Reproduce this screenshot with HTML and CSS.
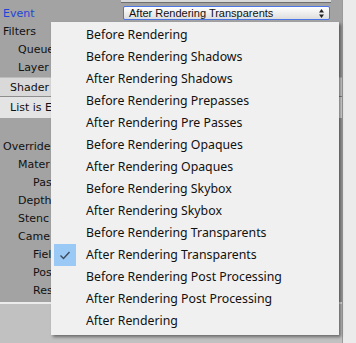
FILE: index.html
```html
<!DOCTYPE html>
<html>
<head>
<meta charset="utf-8">
<link rel="stylesheet" href="styles.css">
</head>
<body>
<div class="app">
  <div class="inspector">
    <div class="prev"><div class="prev-field"></div></div>
    <div class="row event-row">
      <span class="label event">Event</span>
      <div class="popup">
        <span>After Rendering Transparents</span>
        <svg class="arrows" width="5" height="9" viewBox="0 0 5 9"><path d="M2.5 0L5 3.5H0Z M2.5 9L5 5.5H0Z" fill="#222"/></svg>
      </div>
    </div>
    <div class="row"><span class="label">Filters</span></div>
    <div class="row i1"><span class="label">Queue</span></div>
    <div class="row i1 tall"><span class="label">Layer</span></div>
    <div class="list-head"><span class="label">Shader</span></div>
    <div class="list-body"><span class="label">List is E</span></div>
    <div class="row gap"></div>
    <div class="row"><span class="label">Override</span></div>
    <div class="row i1"><span class="label">Mater</span></div>
    <div class="row i2"><span class="label">Pas</span></div>
    <div class="row i1"><span class="label">Depth</span></div>
    <div class="row i1"><span class="label">Stenc</span></div>
    <div class="row i1"><span class="label">Came</span></div>
    <div class="row i2"><span class="label">Fiel</span></div>
    <div class="row i2"><span class="label">Pos</span></div>
    <div class="row i2"><span class="label">Res</span></div>
    <div class="foot"></div>
  </div>
  <div class="side"></div>

  <ul class="menu">
    <li>Before Rendering</li>
    <li>Before Rendering Shadows</li>
    <li>After Rendering Shadows</li>
    <li>Before Rendering Prepasses</li>
    <li>After Rendering Pre Passes</li>
    <li>Before Rendering Opaques</li>
    <li>After Rendering Opaques</li>
    <li>Before Rendering Skybox</li>
    <li>After Rendering Skybox</li>
    <li>Before Rendering Transparents</li>
    <li class="checked"><span class="check"><svg width="22" height="22" viewBox="0 0 22 22"><path d="M6.5 11.5L9.5 14.5L15.5 8" fill="none" stroke="#3d4b5c" stroke-width="1.4"/></svg></span>After Rendering Transparents</li>
    <li>Before Rendering Post Processing</li>
    <li>After Rendering Post Processing</li>
    <li>After Rendering</li>
  </ul>
</div>
</body>
</html>
```

FILE: styles.css
```css
* { box-sizing: border-box; }
html, body { margin: 0; padding: 0; }
body { width: 356px; height: 343px; overflow: hidden; background: #eaeaea; }
.app { position: relative; display: flex; width: 356px; height: 343px; }
.inspector {
  width: 343px;
  height: 343px;
  background: #a3a3a3;
  display: flex;
  flex-direction: column;
  border-right: 1px solid #9a9a9a;
}
.side { flex: 1; background: #ebebeb; }
.label {
  font-family: "DejaVu Sans", Verdana, sans-serif;
  font-size: 11px;
  color: #111;
  white-space: nowrap;
}
.prev { height: 4px; display: flex; flex-shrink: 0; }
.prev-field {
  margin-left: 121px;
  width: 210px;
  height: 3px;
  background: #d9d9d9;
  border-bottom: 1px solid #6f6f6f;
}
.row {
  height: 18px;
  display: flex;
  align-items: center;
  padding-left: 3px;
  flex-shrink: 0;
}
.row.i1 { padding-left: 18px; }
.row.i2 { padding-left: 33px; }
.row.tall { height: 19px; }
.row.gap { height: 19px; }
.event { color: #1f44d8; width: 120px; }
.popup {
  width: 207px;
  height: 14px;
  border: 1px solid #4b74e6;
  border-radius: 2px;
  background: linear-gradient(#ffffff, #dedede);
  display: flex;
  align-items: center;
  justify-content: space-between;
  padding: 0 5px 0 5px;
  font-family: "Liberation Sans", Arial, sans-serif;
  font-size: 11px;
  color: #111;
}
.arrows { display: block; }
.list-head {
  height: 20px;
  background: #d9d9d9;
  border-top: 1px solid #bdbdbd;
  border-bottom: 1px solid #8e8e8e;
  display: flex;
  align-items: center;
  padding-left: 10px;
  flex-shrink: 0;
}
.list-body {
  height: 21px;
  background: #e4e4e4;
  display: flex;
  align-items: center;
  padding-left: 10px;
  flex-shrink: 0;
}
.foot {
  margin-top: 3px;
  flex: 1;
  background: #c1c1c1;
  border-top: 2px solid #ececec;
}
.menu {
  position: absolute;
  left: 51px;
  top: 22px;
  width: 288px;
  margin: 0;
  padding: 2px 0 3px 0;
  list-style: none;
  background: #f0f0f0;
  box-shadow: 2px 2px 3px rgba(0, 0, 0, 0.45);
  font-family: "Noto Sans", "Open Sans", sans-serif;
  font-size: 12.3px;
  color: #111;
}
.menu li {
  height: 22px;
  line-height: 22px;
  padding-left: 35px;
  position: relative;
  white-space: nowrap;
}
.check {
  position: absolute;
  left: 3px;
  top: 0;
  width: 22px;
  height: 22px;
  background: #99c9f4;
}
.check svg { display: block; }
```
